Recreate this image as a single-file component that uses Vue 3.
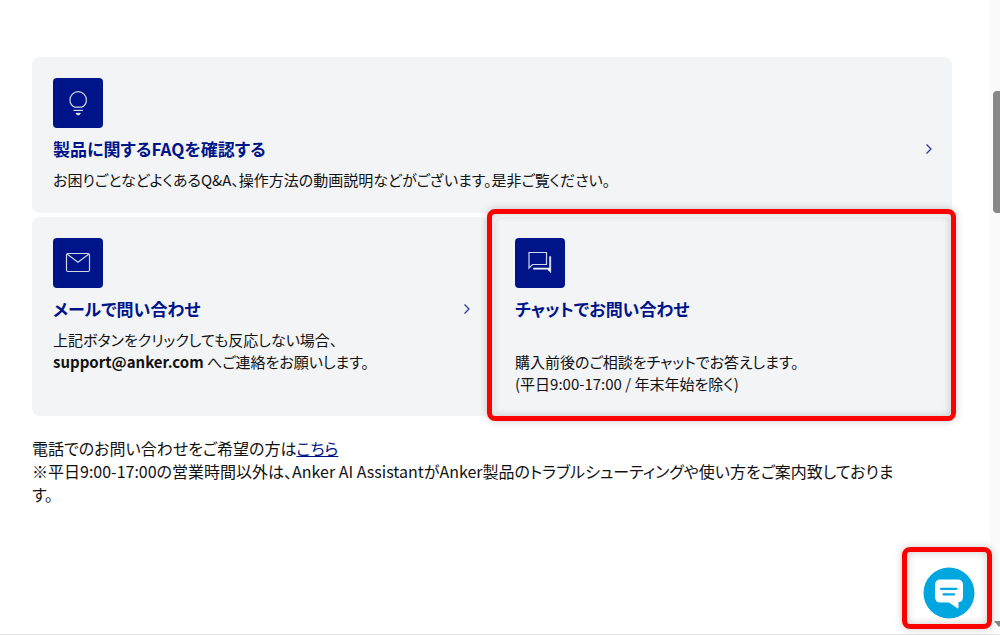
<script setup>
const cards = [
  {
    id: 'faq',
    icon: 'bulb',
    title: '製品に関するFAQを確認する',
    lines: [[{ text: 'お困りごとなどよくあるQ&A、操作方法の動画説明などがございます。是非ご覧ください。' }]],
    arrow: true,
  },
  {
    id: 'mail',
    icon: 'mail',
    title: 'メールで問い合わせ',
    lines: [
      [{ text: '上記ボタンをクリックしても反応しない場合、' }],
      [{ text: 'support@anker.com', strong: true }, { text: ' へご連絡をお願いします。' }],
    ],
    arrow: true,
  },
  {
    id: 'chat',
    icon: 'chat',
    title: 'チャットでお問い合わせ',
    lines: [
      [{ text: '\u00a0' }],
      [{ text: '購入前後のご相談をチャットでお答えします。' }],
      [{ text: '(平日9:00-17:00 / 年末年始を除く)' }],
    ],
    marked: true,
  },
]
</script>

<template>
  <div class="page">
    <main class="content">
      <div class="cards">
        <a
          v-for="card in cards"
          :key="card.id"
          href="#"
          class="card"
          :class="[card.id, { marked: card.marked }]"
        >
          <span class="tile">
            <svg v-if="card.icon === 'bulb'" width="26" height="28" viewBox="0 0 26 28" fill="none" stroke="#d3d7ee" stroke-width="1.2">
              <path d="M9.8 18.2C6.8 16.8 5 14 5 10.900a8.200 8.200 0 0 1 16.400 0c0 3.100-1.800 5.900-4.800 7.300z" />
              <path d="M8.500 21.400h9.400" />
              <path d="M11 24.300h4.400l-1 1.500h-2.400z" stroke="#fff" fill="#fff" stroke-width="0.600" />
            </svg>
            <svg v-else-if="card.icon === 'mail'" width="26" height="22" viewBox="0 0 26 22" fill="none" stroke="#d3d7ee" stroke-width="1.200">
              <rect x="1.500" y="1.500" width="23" height="18" rx="1.500" />
              <path d="M2 2l11 8.200L24 2" />
            </svg>
            <svg v-else width="26" height="24" viewBox="0 0 26 24" fill="none" stroke="#d3d7ee" stroke-width="1.200">
              <path d="M2 1.500h17.500v12H5.500L2 17z" />
              <path d="M22.500 5.500h1.300v16.200L20.300 18.300H6.500v-1.300H22.500z" fill="#fff" stroke-width="0.600" />
            </svg>
          </span>
          <span class="title">{{ card.title }}</span>
          <span class="text">
            <span v-for="(line, i) in card.lines" :key="i" class="line">
              <template v-for="(part, j) in line" :key="j">
                <strong v-if="part.strong">{{ part.text }}</strong>
                <template v-else>{{ part.text }}</template>
              </template>
            </span>
          </span>
          <svg v-if="card.arrow" class="arrow" width="8" height="12" viewBox="0 0 8 12" fill="none" stroke="#2a3a9e" stroke-width="1.300">
            <path d="M1.500 1.500L6 6l-4.500 4.500" />
          </svg>
        </a>
      </div>
      <p class="note">
        電話でのお問い合わせをご希望の方は<a href="#">こちら</a><br />※平日9:00-17:00の営業時間以外は、Anker AI AssistantがAnker製品のトラブルシューティングや使い方をご案内致しておりま<br />す。
      </p>
    </main>
    <div class="track">
      <div class="thumb"></div>
      <svg class="down" width="6" height="6" viewBox="0 0 6 6"><path d="M0 0h9L5 6z" fill="#858585" /></svg>
    </div>
    <div class="launcher">
      <button type="button" aria-label="チャット">
        <svg width="52" height="52" viewBox="0 0 52 52">
          <circle cx="26" cy="26" r="25.500" fill="#00a6df" />
          <path d="M17.500 12.500h17q5.500 0 5.500 5.500v11.500q0 5.500-4.500 5.800v4.900q0 1.600-1.500.7L26 35.400h-8.500q-5.500 0-5.500-5.500V18q0-5.500 5.500-5.500z" fill="#fff" />
          <path d="M18 21.800h15.500M20.500 27.300h10.500" stroke="#00a6df" stroke-width="2.200" stroke-linecap="round" />
        </svg>
      </button>
    </div>
  </div>
</template>

<style>
body {
  background: #fff;
}
</style>

<style scoped>
.page {
  position: relative;
  box-sizing: border-box;
  min-height: 100vh;
  padding: 57px 48px 0 32px;
  border-bottom: 1px solid #e2e2e2;
  font-family: "Noto Sans CJK JP", sans-serif;
  font-feature-settings: "palt";
  color: #111;
}
.cards {
  display: grid;
  grid-template-columns: 1fr 1fr;
  gap: 4px;
}
.card {
  position: relative;
  display: flex;
  flex-direction: column;
  align-items: flex-start;
  box-sizing: border-box;
  padding: 21px;
  border-radius: 8px;
  background: #f2f4f6;
  color: inherit;
  text-decoration: none;
}
.faq {
  grid-column: 1 / -1;
  min-height: 156px;
}
.mail,
.chat {
  min-height: 199px;
}
.tile {
  display: flex;
  align-items: center;
  justify-content: center;
  width: 50px;
  height: 50px;
  border-radius: 4px;
  background: #001489;
}
.title {
  margin-top: 7px;
  font-size: 17px;
  line-height: 28px;
  font-weight: 700;
  color: #001489;
}
.text {
  margin-top: 6px;
  font-size: 15px;
  line-height: 22px;
}
.line {
  display: block;
}
.arrow {
  position: absolute;
  right: 19px;
  top: 86px;
}
.marked::after {
  content: "";
  position: absolute;
  inset: -8px -4px -5px -7px;
  border: 5px solid #f00;
  border-radius: 8px;
  box-shadow: 0 0 8px rgba(0, 0, 0, 0.2), inset 0 0 8px rgba(0, 0, 0, 0.2);
}
.note {
  margin: 21px 0 0;
  font-size: 16px;
  line-height: 23px;
}
.note a {
  color: #001489;
}
.track {
  position: absolute;
  top: 0;
  right: 0;
  bottom: 0;
  width: 10px;
  background: #fbfbfb;
}
.thumb {
  height: 122px;
  margin: 91px 0 0 3px;
  border-radius: 4px 0 0 4px;
  background: #888;
}
.down {
  position: absolute;
  right: 0;
  bottom: 7px;
}
.launcher {
  position: absolute;
  right: 8px;
  bottom: 5px;
  box-sizing: border-box;
  width: 90px;
  height: 82px;
  padding: 15px 16px;
  border: 5px solid #f00;
  border-radius: 8px;
  box-shadow: 0 0 8px rgba(0, 0, 0, 0.2), inset 0 0 8px rgba(0, 0, 0, 0.2);
}
.launcher button {
  display: block;
  padding: 0;
  border: 0;
  background: none;
}
</style>
